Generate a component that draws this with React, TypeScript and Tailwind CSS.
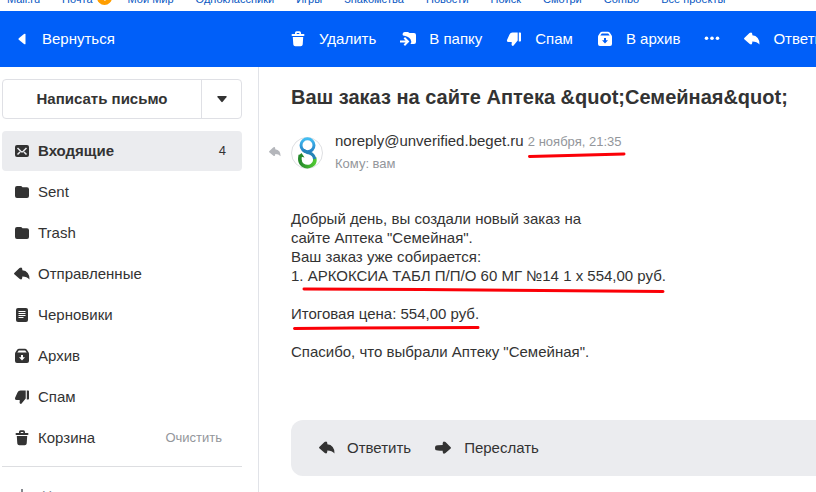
import type { ReactNode } from "react";

type IconProps = { className?: string };

function Svg({ children, className }: IconProps & { children: ReactNode }) {
  return (
    <svg
      viewBox="0 0 16 16"
      fill="currentColor"
      aria-hidden="true"
      className={className ?? "size-4 shrink-0"}
    >
      {children}
    </svg>
  );
}

const TrashIcon = () => (
  <Svg>
    <path
      fillRule="evenodd"
      d="M5 3V2Q5 .3 6.500 .3H9.500Q11 .3 11 2V3H13.500Q14.500 3 14.500 4Q14.500 5 13.500 5H2.500Q1.500 5 1.500 4Q1.500 3 2.500 3ZM6.700 3H9.300V2H6.700ZM2.800 6H13.200L12.700 13.500Q12.500 15.300 10.700 15.300H5.300Q3.500 15.300 3.300 13.500Z"
    />
  </Svg>
);

const MoveIcon = () => (
  <Svg>
    <path d="M3 4.500Q2 3 3 2Q3.500 1 5 1H8L9.500 2H14Q16 2 16 4V11Q16 13 14 13H10.500Q12 10.500 10.500 8.200Q8 5 3 4.500Z" />
    <path
      d="M0 10.500H7.500M4.300 6.700L8 10.500L4.300 14.300"
      fill="none"
      stroke="currentColor"
      strokeWidth="2"
    />
  </Svg>
);

const SpamIcon = () => (
  <Svg>
    <path d="M6.500 1.500H11.700V9.500L8 14Q7 15.500 6 14.500Q5.300 13.800 5.700 12.500V11H2.500Q.5 11 1 9L3.500 3.500Q4.300 1.500 6.500 1.500ZM12.800 1.500H14.200Q15 1.500 15 2.300V9.700Q15 10.500 14.200 10.500H12.800Z" />
  </Svg>
);

const ArchiveIcon = () => (
  <Svg>
    <path
      fillRule="evenodd"
      d="M5.200 .8H10.800Q12.200 .8 13 2L14.500 4.300Q15 5 15 6V13Q15 15 13 15H3Q1 15 1 13V6Q1 5 1.500 4.300L3 2Q3.800 .8 5.200 .8ZM4.800 2.500L3.300 4.500H12.700L11.200 2.500ZM7 7V9.200H5L8 12.500L11 9.200H9V7Z"
    />
  </Svg>
);

const DotsIcon = () => (
  <Svg>
    <circle cx="2.500" cy="7.300" r="1.800" />
    <circle cx="8" cy="7.300" r="1.800" />
    <circle cx="13.500" cy="7.300" r="1.800" />
  </Svg>
);

const ReplyIcon = ({ className }: IconProps) => (
  <Svg className={className}>
    <path d="M.3 7L5.500 2Q8 .5 8.300 3V4.300Q15.500 5 15.500 13.500Q13 10.500 8.300 10.500V11.500Q8 14.500 5.500 12.700L.3 8.200Q-.2 7.600 .3 7Z" />
  </Svg>
);

const ForwardIcon = () => (
  <Svg>
    <path d="M15.700 7.200L10.500 2Q8 .5 7.700 3V5Q1.500 5 .5 6Q-.5 8 .5 10Q1.500 10.700 7.700 10.700V12Q8 14.700 10.500 13L15.700 8.400Q16.200 7.800 15.700 7.200Z" />
  </Svg>
);

const FolderIcon = () => (
  <Svg>
    <path d="M1 4Q1 2 3 2H6.500Q7.700 2 8.500 3.200H13Q15 3.200 15 5.200V12Q15 14 13 14H3Q1 14 1 12Z" />
  </Svg>
);

const InboxIcon = () => (
  <Svg>
    <rect x="1" y="2" width="14" height="12" rx="2" />
    <path
      d="M3.500 5L6.800 8.300Q8 9.200 9.200 8.300L12.500 5M3.500 11.500L6 9M12.500 11.500L10 9"
      fill="none"
      stroke="#ebecef"
      strokeWidth="1.500"
    />
  </Svg>
);

const DraftIcon = () => (
  <Svg>
    <rect x="2" y="1" width="12" height="14" rx="2" />
    <path
      d="M4.500 4.500H11.500M4.500 6.500H11.500M4.500 8.500H11.500M4.500 10.500H9.500"
      stroke="white"
    />
  </Svg>
);

const Caret = ({ className }: IconProps) => (
  <Svg className={className}>
    <path d="M3 4.500H13Q13.700 5 13 6L8.800 11.200Q8 12 7.200 11.200L3 6Q2.300 5 3 4.500Z" />
  </Svg>
);

const PROJECTS = [
  "Мой Мир",
  "Одноклассники",
  "Игры",
  "Знакомства",
  "Новости",
  "Поиск",
  "Смотри",
  "Combo",
  "Все проекты",
];

const ACTIONS = [
  { label: "Удалить", icon: <TrashIcon /> },
  { label: "В папку", icon: <MoveIcon /> },
  { label: "Спам", icon: <SpamIcon /> },
  { label: "В архив", icon: <ArchiveIcon /> },
  { label: "", icon: <DotsIcon /> },
  { label: "Ответить", icon: <ReplyIcon /> },
];

const FOLDERS = [
  { name: "Входящие", icon: <InboxIcon />, count: 4 },
  { name: "Sent", icon: <FolderIcon /> },
  { name: "Trash", icon: <FolderIcon /> },
  { name: "Отправленные", icon: <ReplyIcon /> },
  { name: "Черновики", icon: <DraftIcon /> },
  { name: "Архив", icon: <ArchiveIcon /> },
  { name: "Спам", icon: <SpamIcon /> },
  { name: "Корзина", icon: <TrashIcon />, clearable: true },
];

function ProjectBar() {
  return (
    <nav className="flex h-[11px] items-end gap-[22px] overflow-hidden pb-1 pl-[7px] text-[11px] leading-4 whitespace-nowrap text-[#0857c2]">
      <a href="#mail">Mail.ru</a>
      <a href="#inbox" className="-mr-1.5 flex items-end gap-1">
        Почта
        <span className="mb-0.5 size-[15px] rounded-full bg-[#ff9e00] text-center text-[10px] leading-[15px] text-white">
          4
        </span>
      </a>
      {PROJECTS.map((project) => (
        <a key={project} href="#project">
          {project}
        </a>
      ))}
    </nav>
  );
}

function Toolbar() {
  return (
    <header className="flex h-14 items-center overflow-hidden bg-[#005ff9] whitespace-nowrap text-white">
      <div className="w-[290px] shrink-0 pl-[14px]">
        <button className="flex items-center gap-3">
          <Caret className="size-4 rotate-90" />
          Вернуться
        </button>
      </div>
      <div className="flex shrink-0 items-center gap-6">
        {ACTIONS.map(({ label, icon }) => (
          <button
            key={label}
            aria-label={label || "Ещё"}
            className="flex shrink-0 items-center gap-[13px]"
          >
            {icon}
            {label}
          </button>
        ))}
      </div>
    </header>
  );
}

function Sidebar() {
  return (
    <aside className="w-[259px] shrink-0 border-r border-[#e1e3e8] pt-3 pr-4 pl-0.5">
      <div className="flex h-10 rounded border border-[#dfe0e5]">
        <button className="flex-1 font-bold">Написать письмо</button>
        <button
          aria-label="Другие варианты"
          className="flex w-10 items-center justify-center border-l border-[#dfe0e5]"
        >
          <Caret className="size-[14px]" />
        </button>
      </div>
      <ul className="mt-3 flex flex-col gap-px">
        {FOLDERS.map(({ name, icon, count, clearable }) => (
          <li
            key={name}
            className={`flex h-10 items-center rounded ${count ? "bg-[#ebecef] font-bold" : ""}`}
          >
            <a href="#folder" className="flex flex-1 items-center gap-2 pl-3">
              {icon}
              {name}
            </a>
            {count && <span className="pr-4 text-[13px] font-normal">{count}</span>}
            {clearable && (
              <button className="pr-5 text-[13px] text-[#93969b]">Очистить</button>
            )}
          </li>
        ))}
      </ul>
      <hr className="mt-2 border-[#dddee1]" />
      <button className="mt-[19px] flex items-center gap-3 pl-3 text-sm text-[#87898f]">
        <Svg>
          <path d="M7 1H9V7H15V9H9V15H7V9H1V7H7Z" />
        </Svg>
        Новая папка
      </button>
    </aside>
  );
}

function Avatar() {
  return (
    <svg viewBox="0 0 32 32" className="size-8 shrink-0" role="img" aria-label="beget">
      <defs>
        <linearGradient id="ring" x1="0" y1="0" x2="0" y2="1">
          <stop offset="0" stopColor="#42bdf2" />
          <stop offset="1" stopColor="#237fc4" />
        </linearGradient>
        <linearGradient id="tail" x1="0" y1="0" x2="1" y2="0">
          <stop offset="0" stopColor="#25892b" />
          <stop offset="1" stopColor="#4fc832" />
        </linearGradient>
      </defs>
      <circle cx="16" cy="16" r="15.500" fill="white" stroke="#dedfe2" />
      <g fill="none" strokeWidth="3">
        <path
          d="M23.500 20.500Q25 26 20.500 28.500Q16 31 11.500 28Q7.500 24.500 9.500 18"
          stroke="url(#tail)"
          strokeWidth="3.600"
        />
        <circle cx="16.500" cy="8.300" r="6.500" stroke="url(#ring)" />
        <path d="M12.500 13Q14 15 18.500 16Q23 17.500 23.700 22" stroke="#2584b8" />
      </g>
      <path d="M7.300 19L10.500 16L13.500 20.500Z" fill="#25892b" />
    </svg>
  );
}

// Hand-drawn red marker line laid under a piece of text
function Marker({ className, viewBox, d }: { className: string; viewBox: string; d: string }) {
  return (
    <svg className={`absolute ${className}`} viewBox={viewBox} aria-hidden="true">
      <path d={d} fill="none" stroke="#fb0007" strokeWidth="3" strokeLinecap="round" />
    </svg>
  );
}

function Letter() {
  return (
    <main className="min-w-0 flex-1 pt-4">
      <h1 className="pl-8 text-xl leading-7 font-bold whitespace-nowrap">
        Ваш заказ на сайте Аптека &amp;quot;Семейная&amp;quot;
      </h1>
      <div className="mt-5 flex pl-2.5 whitespace-nowrap">
        <button aria-label="Ответить" className="mr-2.5 text-[#b4b6bb]">
          <ReplyIcon className="size-3" />
        </button>
        <div className="mt-1.5">
          <Avatar />
        </div>
        <div className="ml-3">
          <p className="leading-5">
            noreply@unverified.beget.ru{" "}
            <time className="relative text-[13px] text-[#93969b]">
              2 ноября, 21:35
              <Marker
                className="top-[17px] left-0 h-2 w-[98px]"
                viewBox="0 0 98 8"
                d="M1.500 5.500L40 4.500L96 3"
              />
            </time>
          </p>
          <p className="mt-1 text-[13px] leading-4 text-[#93969b]">Кому: вам</p>
        </div>
      </div>
      <div className="mt-[37px] pl-8 leading-[19px] whitespace-nowrap">
        <p>
          Добрый день, вы создали новый заказ на
          <br />
          сайте Аптека "Семейная".
          <br />
          Ваш заказ уже собирается:
        </p>
        <p>
          1.{" "}
          <span className="relative">
            АРКОКСИА ТАБЛ П/П/О 60 МГ №14 1 x 554,00 руб.
            <Marker
              className="top-[19px] -left-1.5 h-2 w-[364px]"
              viewBox="0 0 364 8"
              d="M2 3L120 3.500L240 4.500L361 5.500"
            />
          </span>
        </p>
        <p className="relative mt-[19px]">
          Итоговая цена: 554,00 руб.
          <Marker
            className="top-5 left-0 h-2 w-[190px]"
            viewBox="0 0 190 8"
            d="M3.500 4.500L60 4L187 3.500"
          />
        </p>
        <p className="mt-[19px]">Спасибо, что выбрали Аптеку "Семейная".</p>
      </div>
      <div className="mt-[59px] ml-8 flex h-14 items-center gap-6 rounded-l-xl bg-[#ebecef] pl-7">
        <button className="flex items-center gap-3">
          <ReplyIcon />
          Ответить
        </button>
        <button className="flex items-center gap-[13px]">
          <ForwardIcon />
          Переслать
        </button>
      </div>
    </main>
  );
}

function App() {
  return (
    <div className="flex h-screen flex-col overflow-hidden bg-white font-['Liberation_Sans',Arial,sans-serif] text-[15px] leading-5 text-[#333333]">
      <ProjectBar />
      <Toolbar />
      <div className="flex min-h-0 flex-1">
        <Sidebar />
        <Letter />
      </div>
    </div>
  );
}

export default App;
